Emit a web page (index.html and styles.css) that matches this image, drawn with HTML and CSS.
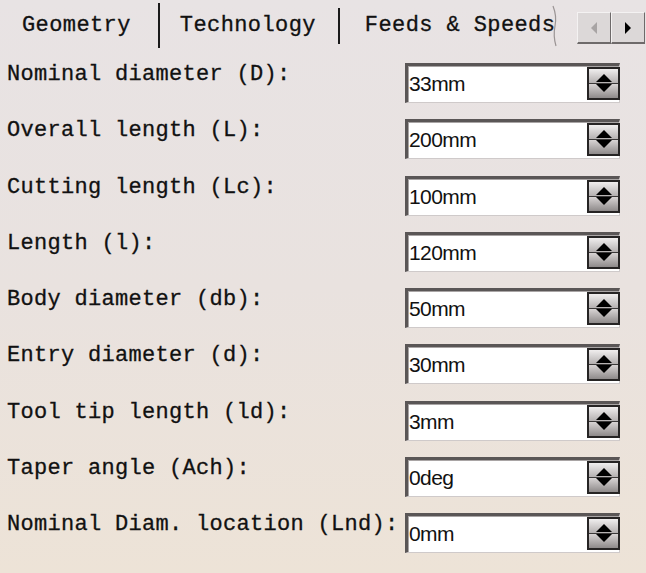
FILE: index.html
```html
<!DOCTYPE html>
<html>
<head>
<meta charset="utf-8">
<link rel="stylesheet" href="styles.css">
</head>
<body>
<div class="panel">
  <div class="tabbar">
    <div class="tabs">
      <div class="tab tab-geo">Geometry</div>
      <div class="sep"></div>
      <div class="tab tab-tech">Technology</div>
      <div class="sep sep2"></div>
      <div class="tab tab-feeds">Feeds &amp; Speeds
        <svg class="clip" width="6" height="44" viewBox="0 0 6 44"><path d="M1 2 Q5 12 3 22 Q1 32 4 42" fill="none" stroke="#9a9494" stroke-width="1.2"/></svg>
      </div>
    </div>
    <div class="scroll">
      <div class="sbtn"><svg width="10" height="14" viewBox="0 0 10 14"><path d="M8 1 L2 7 L8 13 Z" fill="#a8a4a4"/></svg></div>
      <div class="sbtn"><svg width="10" height="14" viewBox="0 0 10 14"><path d="M2 1 L8 7 L2 13 Z" fill="#000"/></svg></div>
    </div>
  </div>
  <div class="form">
    <div class="row"><div class="label">Nominal diameter (D):</div><div class="field"><span class="val">33mm</span><div class="spin"><div class="up"></div><div class="down"></div></div></div></div>
    <div class="row"><div class="label">Overall length (L):</div><div class="field"><span class="val">200mm</span><div class="spin"><div class="up"></div><div class="down"></div></div></div></div>
    <div class="row"><div class="label">Cutting length (Lc):</div><div class="field"><span class="val">100mm</span><div class="spin"><div class="up"></div><div class="down"></div></div></div></div>
    <div class="row"><div class="label">Length (l):</div><div class="field"><span class="val">120mm</span><div class="spin"><div class="up"></div><div class="down"></div></div></div></div>
    <div class="row"><div class="label">Body diameter (db):</div><div class="field"><span class="val">50mm</span><div class="spin"><div class="up"></div><div class="down"></div></div></div></div>
    <div class="row"><div class="label">Entry diameter (d):</div><div class="field"><span class="val">30mm</span><div class="spin"><div class="up"></div><div class="down"></div></div></div></div>
    <div class="row"><div class="label">Tool tip length (ld):</div><div class="field"><span class="val">3mm</span><div class="spin"><div class="up"></div><div class="down"></div></div></div></div>
    <div class="row"><div class="label">Taper angle (Ach):</div><div class="field"><span class="val">0deg</span><div class="spin"><div class="up"></div><div class="down"></div></div></div></div>
    <div class="row"><div class="label">Nominal Diam. location (Lnd):</div><div class="field"><span class="val">0mm</span><div class="spin"><div class="up"></div><div class="down"></div></div></div></div>
  </div>
</div>
</body>
</html>
```
FILE: styles.css
```css
html, body {
  margin: 0;
  padding: 0;
}
body {
  width: 646px;
  height: 573px;
  overflow: hidden;
  background: linear-gradient(180deg, #e8e3e4 0%, #e9e2df 50%, #ede3d7 100%);
  font-family: "Liberation Mono", "DejaVu Sans Mono", monospace;
  color: #111;
}
.panel {
  height: 573px;
  width: 646px;
}
.tabbar {
  height: 51px;
  display: flex;
  align-items: flex-start;
}
.tabs {
  display: flex;
  align-items: center;
  height: 51px;
  width: 558px;
  flex: none;
  overflow: hidden;
}
.tab {
  font-size: 22px;
  letter-spacing: 0.4px;
  line-height: 26px;
  white-space: nowrap;
  margin-top: 0;
  -webkit-text-stroke: 0.3px #111;
}
.tab-geo { padding-left: 22px; padding-right: 27px; }
.tab-tech { padding-left: 20px; padding-right: 22px; }
.tab-feeds {
  padding-left: 25px;
  display: flex;
  align-items: center;
}
.clip {
  margin-left: -3px;
  flex: none;
}
.sep {
  width: 2px;
  height: 45px;
  background: #1a1a1a;
  align-self: flex-start;
  margin-top: 3px;
  flex: none;
}
.sep2 {
  height: 36px;
  margin-top: 8px;
}
.scroll {
  display: flex;
  margin-left: 19px;
  margin-top: 12px;
  flex: none;
}
.sbtn {
  width: 32px;
  height: 29px;
  background: #dcd8d8;
  border-top: 1px solid #f4f2f2;
  border-left: 1px solid #f4f2f2;
  border-right: 1px solid #6e6a6a;
  border-bottom: 2px solid #6e6a6a;
  display: flex;
  align-items: center;
  justify-content: center;
}
.form {
  display: grid;
  grid-auto-rows: 56.25px;
  padding-top: 11px;
}
.row {
  display: grid;
  grid-template-columns: 405px 215px;
  align-items: start;
}
.label {
  font-size: 22px;
  letter-spacing: 0.3px;
  line-height: 22px;
  padding-left: 7px;
  margin-top: 2px;
  white-space: nowrap;
  -webkit-text-stroke: 0.3px #111;
}
.field {
  margin-top: 1px;
  height: 36px;
  background: #fff;
  border-top: 3px solid #5a5656;
  border-left: 3px solid #5a5656;
  border-right: 1px solid #cfcaca;
  border-bottom: 1px solid #cfcaca;
  box-shadow: inset 1px 1px 0 #a9a5a5;
  display: flex;
  align-items: center;
}
.val {
  flex: 1;
  font-family: "Liberation Sans", Arial, sans-serif;
  font-size: 21px;
  letter-spacing: -0.6px;
  color: #111;
  padding-left: 1px;
  line-height: 36px;
}
.spin {
  width: 29px;
  height: 29px;
  border: 2px solid #262424;
  margin-right: -1px;
  align-self: flex-start;
  margin-top: 1px;
  display: flex;
  flex-direction: column;
  background: #3a3838;
  gap: 1px;
}
.up, .down {
  flex: 1;
  position: relative;
}
.up {
  background: linear-gradient(180deg, #f0eeee 0%, #b4b0b0 100%);
}
.down {
  background: linear-gradient(180deg, #d8d4d4 0%, #8e8a8a 100%);
}
.up::after, .down::after {
  content: "";
  position: absolute;
  left: 50%;
  margin-left: -8px;
  width: 0;
  height: 0;
  border-left: 8px solid transparent;
  border-right: 8px solid transparent;
}
.up::after {
  bottom: 1px;
  border-bottom: 8px solid #000;
}
.down::after {
  top: 0;
  border-top: 8px solid #000;
}
```
